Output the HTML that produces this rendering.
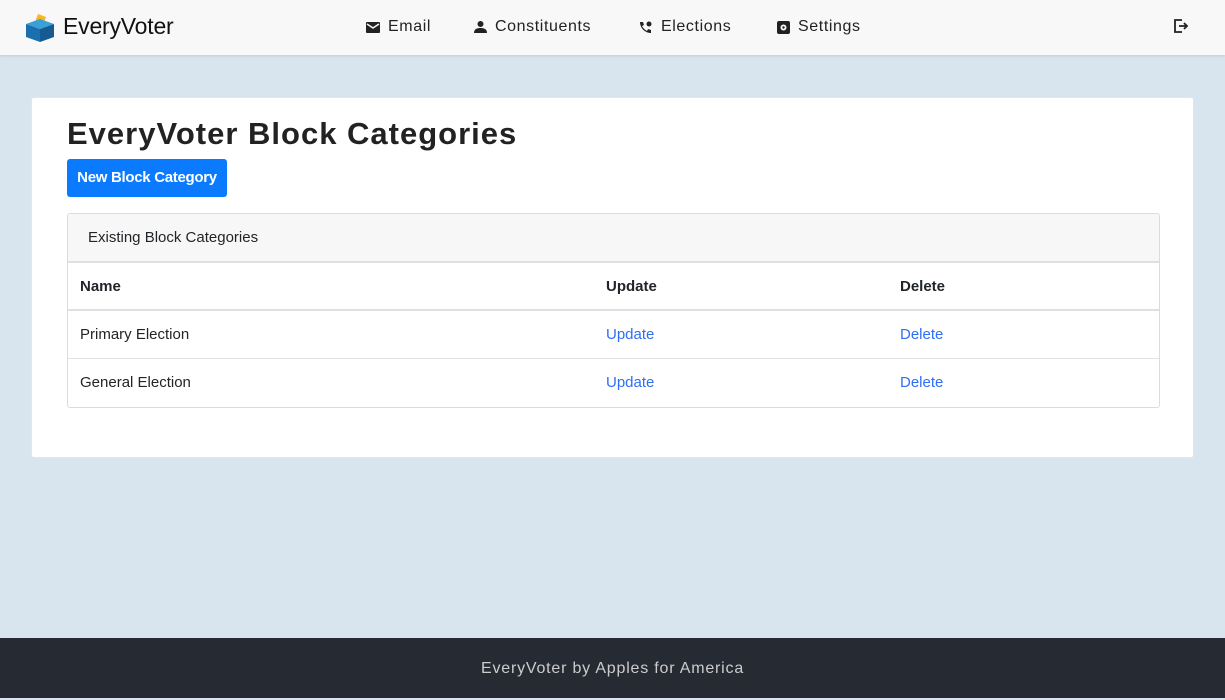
<!DOCTYPE html>
<html><head><style>
*{box-sizing:border-box;margin:0;padding:0}
body{width:1225px;height:698px;background:#d8e4ee;font-family:"Liberation Sans",sans-serif;position:relative;overflow:hidden;color:#212529}
.nav{position:absolute;top:0;left:0;width:1225px;height:55px;background:#f8f8f8;box-shadow:0 1px 3px rgba(0,0,0,.1)}
.logo{position:absolute;left:25px;top:12px}
.brand{position:absolute;left:63px;top:13px;font-size:23px;color:#111;letter-spacing:-.2px}
.ni{position:absolute;top:18px;font-size:16px;color:#222;display:flex;align-items:center;gap:8px;letter-spacing:.6px}
.card{position:absolute;left:31px;top:97px;width:1163px;height:361px;background:#fff;border:1px solid #e3e6ea;border-radius:3px}
h1{position:absolute;left:35px;top:18px;font-size:31px;font-weight:bold;color:#222;letter-spacing:1px}
.btn{position:absolute;left:35px;top:61px;width:160px;height:38px;background:#0a7bff;color:#fff;border-radius:3px;font-size:15px;font-weight:bold;line-height:38px;text-align:center;letter-spacing:-.3px}
.tbl{position:absolute;left:35px;top:115px;width:1093px;height:195px;border:1px solid #dcdcdc;border-radius:3px;overflow:hidden}
.hd{height:49px;background:#f7f7f7;border-bottom:2px solid #e0e0e0;padding-left:20px;line-height:47px;font-size:15px}
.row{position:relative;height:48px;border-bottom:1px solid #e3e3e3;font-size:15px}
.row span{position:absolute;top:15px}
.row.h{border-bottom:2px solid #e0e0e0}
.row.h span{font-weight:bold}
a{color:#2f6ef5;text-decoration:none}
.foot{position:absolute;left:0;top:638px;width:1225px;height:60px;background:#262a33;color:#ccc;text-align:center;line-height:62px;font-size:16px;letter-spacing:.8px}
</style></head><body>
<div class="nav">
<svg class="logo" width="30" height="30" viewBox="0 0 30 30"><polygon points="13,2 21,5 18,13 10,10" fill="#f5b820"/><polygon points="1,12 15,7 29,12 15,17" fill="#3aa0d8"/><polygon points="1,12 15,17 15,30 1,25" fill="#1c6fae"/><polygon points="29,12 15,17 15,30 29,25" fill="#155a90"/></svg>
<div class="brand">EveryVoter</div>
<div class="ni" style="left:366px"><svg width="14" height="11"><rect width="14" height="11" rx="1" fill="#222"/><path d="M1 2l6 4 6-4" stroke="#f8f8f8" stroke-width="1.5" fill="none"/></svg>Email</div>
<div class="ni" style="left:474px"><svg width="13" height="12"><circle cx="6.5" cy="3" r="3" fill="#222"/><path d="M0 12c0-4 3-5 6.5-5s6.5 1 6.5 5z" fill="#222"/></svg>Constituents</div>
<div class="ni" style="left:639px"><svg width="14" height="13"><path d="M1 1l3 0 1 3-2 1c1 2 3 4 5 5l1-2 3 1v3c-6 0-11-5-11-11z" fill="#222"/><circle cx="10" cy="3" r="2.5" fill="#222"/></svg>Elections</div>
<div class="ni" style="left:777px"><svg width="13" height="13"><rect width="13" height="13" rx="2" fill="#222"/><circle cx="6.5" cy="6.5" r="3" fill="#f8f8f8"/><circle cx="6.5" cy="6.5" r="1.2" fill="#222"/></svg>Settings</div>
<svg style="position:absolute;left:1174px;top:19px" width="15" height="14"><path d="M8 1H1v12h7" stroke="#222" stroke-width="1.8" fill="none"/><path d="M5 7h8M10 4l3 3-3 3" stroke="#222" stroke-width="1.8" fill="none"/></svg>
</div>
<div class="card">
<h1>EveryVoter Block Categories</h1>
<div class="btn">New Block Category</div>
<div class="tbl">
<div class="hd">Existing Block Categories</div>
<div class="row h"><span style="left:12px">Name</span><span style="left:538px">Update</span><span style="left:832px">Delete</span></div>
<div class="row"><span style="left:12px">Primary Election</span><span style="left:538px"><a>Update</a></span><span style="left:832px"><a>Delete</a></span></div>
<div class="row" style="border:none"><span style="left:12px">General Election</span><span style="left:538px"><a>Update</a></span><span style="left:832px"><a>Delete</a></span></div>
</div>
</div>
<div class="foot">EveryVoter by Apples for America</div>
</body></html>
